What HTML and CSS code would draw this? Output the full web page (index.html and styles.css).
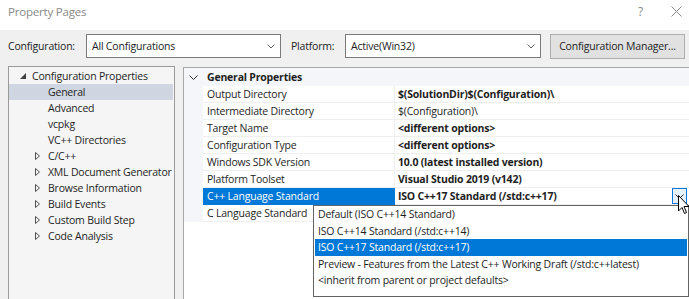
FILE: index.html
```html
<!DOCTYPE html>
<html>
<head>
<meta charset="utf-8">
<link rel="stylesheet" href="styles.css">
</head>
<body>
<div class="window">
  <div class="titlebar">
    <span class="title">Property Pages</span>
    <span class="tb-help">?</span>
    <span class="tb-close"><svg width="11" height="11" viewBox="0 0 11 11"><path d="M0.5 0.5 L10.5 10.5 M10.5 0.5 L0.5 10.5" stroke="#8a8a8a" stroke-width="1" fill="none"/></svg></span>
  </div>
  <div class="toolbar">
    <span class="lbl lbl-config">Configuration:</span>
    <div class="combo combo-config"><span>All Configurations</span><svg class="chev" width="8" height="5" viewBox="0 0 8 5"><path d="M0.5 0.5 L4 4 L7.5 0.5" stroke="#606060" fill="none"/></svg></div>
    <span class="lbl lbl-platform">Platform:</span>
    <div class="combo combo-platform"><span>Active(Win32)</span><svg class="chev" width="8" height="5" viewBox="0 0 8 5"><path d="M0.5 0.5 L4 4 L7.5 0.5" stroke="#606060" fill="none"/></svg></div>
    <button class="btn">Configuration Manager...</button>
  </div>
  <div class="main">
    <div class="tree">
      <div class="node root"><svg class="tri-open" width="6" height="6" viewBox="0 0 6 6"><path d="M6 0 L6 6 L0 6 Z" fill="#404040"/></svg><span>Configuration Properties</span></div>
      <div class="node child selected"><span>General</span></div>
      <div class="node child"><span>Advanced</span></div>
      <div class="node child"><span>vcpkg</span></div>
      <div class="node child"><span>VC++ Directories</span></div>
      <div class="node sub"><svg class="tri" width="5" height="8" viewBox="0 0 5 8"><path d="M0.5 0.5 L4.5 4 L0.5 7.5 Z" stroke="#505050" fill="none"/></svg><span>C/C++</span></div>
      <div class="node sub"><svg class="tri" width="5" height="8" viewBox="0 0 5 8"><path d="M0.5 0.5 L4.5 4 L0.5 7.5 Z" stroke="#505050" fill="none"/></svg><span>XML Document Generator</span></div>
      <div class="node sub"><svg class="tri" width="5" height="8" viewBox="0 0 5 8"><path d="M0.5 0.5 L4.5 4 L0.5 7.5 Z" stroke="#505050" fill="none"/></svg><span>Browse Information</span></div>
      <div class="node sub"><svg class="tri" width="5" height="8" viewBox="0 0 5 8"><path d="M0.5 0.5 L4.5 4 L0.5 7.5 Z" stroke="#505050" fill="none"/></svg><span>Build Events</span></div>
      <div class="node sub"><svg class="tri" width="5" height="8" viewBox="0 0 5 8"><path d="M0.5 0.5 L4.5 4 L0.5 7.5 Z" stroke="#505050" fill="none"/></svg><span>Custom Build Step</span></div>
      <div class="node sub"><svg class="tri" width="5" height="8" viewBox="0 0 5 8"><path d="M0.5 0.5 L4.5 4 L0.5 7.5 Z" stroke="#505050" fill="none"/></svg><span>Code Analysis</span></div>
    </div>
    <div class="props">
      <div class="group-hdr"><svg class="hdr-chev" width="9" height="5" viewBox="0 0 9 5"><path d="M0.5 0.5 L4.5 4.5 L8.5 0.5" stroke="#303030" fill="none"/></svg><span>General Properties</span></div>
      <div class="row"><div class="gutter"></div><div class="name">Output Directory</div><div class="value bold">$(SolutionDir)$(Configuration)\</div></div>
      <div class="row"><div class="gutter"></div><div class="name">Intermediate Directory</div><div class="value">$(Configuration)\</div></div>
      <div class="row"><div class="gutter"></div><div class="name">Target Name</div><div class="value bold">&lt;different options&gt;</div></div>
      <div class="row"><div class="gutter"></div><div class="name">Configuration Type</div><div class="value bold">&lt;different options&gt;</div></div>
      <div class="row"><div class="gutter"></div><div class="name">Windows SDK Version</div><div class="value bold">10.0 (latest installed version)</div></div>
      <div class="row"><div class="gutter"></div><div class="name">Platform Toolset</div><div class="value bold">Visual Studio 2019 (v142)</div></div>
      <div class="row"><div class="gutter"></div><div class="name sel">C++ Language Standard</div><div class="value bold"><span>ISO C++17 Standard (/std:c++17)</span><span class="dd-btn"><svg width="9" height="5" viewBox="0 0 9 5"><path d="M0.5 0.5 L4.5 4.5 L8.5 0.5" stroke="#303030" fill="none"/></svg></span></div></div>
      <div class="row"><div class="gutter"></div><div class="name">C Language Standard</div><div class="value"></div></div>
      <div class="dropdown">
        <div class="item">Default (ISO C++14 Standard)</div>
        <div class="item">ISO C++14 Standard (/std:c++14)</div>
        <div class="item active">ISO C++17 Standard (/std:c++17)</div>
        <div class="item">Preview - Features from the Latest C++ Working Draft (/std:c++latest)</div>
        <div class="item">&lt;inherit from parent or project defaults&gt;</div>
      </div>
      <svg class="cursor" width="12" height="20" viewBox="0 0 12 20"><path d="M0.5 0.5 L0.5 16 L4 12.5 L6.5 18.5 L8.5 17.5 L6 11.5 L11 11.5 Z" fill="#ffffff" stroke="#000000" stroke-width="1" stroke-linejoin="round"/></svg>
    </div>
  </div>
</div>
</body>
</html>
```

FILE: styles.css
```css
* { box-sizing: border-box; }
html, body {
  margin: 0;
  padding: 0;
  width: 689px;
  height: 299px;
  overflow: hidden;
  background: #f0f0f0;
  font-family: "Open Sans", "Noto Sans", sans-serif;
  font-size: 10.5px;
  letter-spacing: -0.2px;
  color: #1e1e1e;
}
.window {
  width: 689px;
  height: 299px;
  display: flex;
  flex-direction: column;
}
.titlebar {
  height: 30px;
  background: #ffffff;
  display: flex;
  align-items: center;
  padding-left: 8px;
  flex: none;
}
.title {
  color: #8a8a8a;
  font-size: 11.5px;
  margin-top: -8px;
}
.tb-help {
  margin-left: auto;
  color: #8a8a8a;
  font-size: 12px;
  margin-top: -8px;
}
.tb-close {
  display: flex;
  margin-left: 28px;
  margin-right: 7px;
  margin-top: -8px;
}
.toolbar {
  margin-top: 4px;
  height: 24px;
  display: flex;
  align-items: center;
  padding-left: 8px;
  flex: none;
}
.lbl { white-space: nowrap; }
.lbl-config { width: 78px; }
.lbl-platform { width: 54px; margin-left: 10px; }
.combo {
  height: 24px;
  background: #ffffff;
  border: 1px solid #7a7a7a;
  display: flex;
  align-items: center;
  padding-left: 5px;
  padding-right: 5px;
}
.combo-config { width: 195px; }
.combo-platform { width: 196px; }
.combo .chev { margin-left: auto; }
.btn {
  margin-left: 9px;
  width: 135px;
  height: 25px;
  background: #e1e1e1;
  border: 1px solid #adadad;
  font-family: inherit;
  font-size: 10.5px;
  letter-spacing: -0.2px;
  color: #1e1e1e;
  padding: 0;
}
.main {
  margin-top: 8px;
  display: flex;
  flex: 1;
  min-height: 0;
}
.tree {
  width: 167px;
  margin-left: 8px;
  border: 1px solid #9a9a9a;
  border-bottom: none;
  background: #f5f5f5;
  padding-top: 1px;
  padding-right: 1px;
  flex: none;
  overflow: hidden;
}
.node {
  height: 16px;
  display: flex;
  align-items: center;
  white-space: nowrap;
}
.node svg { flex: none; }
.node.root { padding-left: 11px; }
.node.root span { margin-left: 6px; }
.node.child { padding-left: 39px; }
.node.sub { padding-left: 26px; }
.node.sub span { margin-left: 8px; }
.node.selected { background: #cfd5e1; }
.props {
  position: relative;
  margin-left: 8px;
  flex: 1;
  background: #ffffff;
  border-top: 1px solid #a8a8a8;
  border-left: 1px solid #a8a8a8;
  margin-top: 1px;
}
.group-hdr {
  height: 18px;
  background: #f4f6fa;
  display: flex;
  align-items: center;
  font-weight: bold;
  padding-left: 5px;
}
.hdr-chev { margin-right: 9px; }
.row {
  height: 17px;
  display: flex;
}
.gutter {
  width: 19px;
  background: #f4f6fa;
  flex: none;
}
.name {
  width: 192px;
  flex: none;
  padding-left: 4px;
  border-bottom: 1px solid #efefef;
  border-right: 1px solid #efefef;
  display: flex;
  align-items: center;
  white-space: nowrap;
}
.name.sel {
  background: #0078d7;
  color: #ffffff;
  border-color: #0078d7;
}
.value {
  flex: 1;
  padding-left: 3px;
  padding-right: 2px;
  border-bottom: 1px solid #efefef;
  display: flex;
  align-items: center;
  white-space: nowrap;
}
.bold { font-weight: bold; }
.dd-btn {
  margin-left: auto;
  width: 15px;
  height: 16px;
  border: 1px solid #0078d7;
  background: #e5f1fb;
  display: flex;
  align-items: center;
  justify-content: center;
}
.dropdown {
  position: absolute;
  left: 129px;
  top: 137px;
  width: 376px;
  height: 92px;
  background: #ffffff;
  border: 1px solid #646464;
  padding: 0 1px;
}
.item {
  height: 16.5px;
  line-height: 16.5px;
  padding-left: 3px;
  white-space: nowrap;
}
.item.active {
  background: #0078d7;
  color: #ffffff;
}
.cursor {
  position: absolute;
  left: 494px;
  top: 127px;
}
```
